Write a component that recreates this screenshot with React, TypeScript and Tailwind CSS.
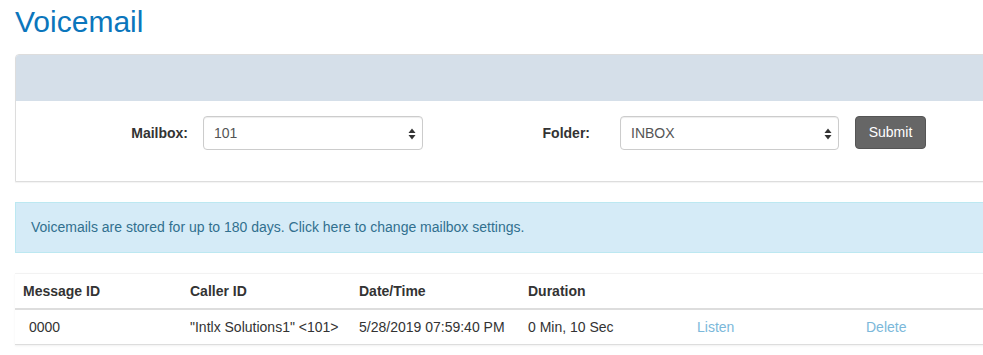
import React from "react";

const font = { fontFamily: '"Liberation Sans", Arial, sans-serif' };

function SelectBox({ value, width }: { value: string; width: string }) {
  return (
    <div
      className={`relative ${width} h-[34px] flex items-center rounded-[4px] border border-[#cccccc] bg-white pl-[10px] text-[14px] text-[#555555] shadow-[inset_0_1px_1px_rgba(0,0,0,0.075)]`}
    >
      <span>{value}</span>
      {/* up/down chevrons */}
      <svg
        className="absolute right-[6px] top-[11px]"
        width="8"
        height="12"
        viewBox="0 0 8 12"
      >
        <path d="M4 0.5 L7.5 5 L0.5 5 Z" fill="#333" />
        <path d="M4 11.5 L7.5 7 L0.5 7 Z" fill="#333" />
      </svg>
    </div>
  );
}

export default function App() {
  const columns = [
    { name: "Message ID", w: "w-[167px]" },
    { name: "Caller ID", w: "w-[169px]" },
    { name: "Date/Time", w: "w-[169px]" },
    { name: "Duration", w: "w-[169px]" },
    { name: "", w: "w-[169px]" },
    { name: "", w: "w-[169px]" },
  ];

  return (
    <div className="w-[983px] h-[355px] overflow-hidden bg-white" style={font}>
      <div className="w-[1040px] pl-[15px] text-[14px] text-[#333333]">
        {/* Title */}
        <h1 className="text-[30px] leading-[36px] text-[#0b76bc] pt-[4px] mb-[14px]">
          Voicemail
        </h1>

        {/* Filter panel */}
        <div className="rounded-t-[4px] border border-[#dddddd] shadow-[0_1px_1px_rgba(0,0,0,0.05)]">
          <div className="h-[46px] bg-[#d5dfe9] rounded-t-[3px]"></div>
          <div className="h-[80px] bg-white pt-[15px] flex">
            <div className="w-[172px] h-[34px] flex items-center justify-end font-bold">
              Mailbox:
            </div>
            <div className="ml-[15px]">
              <SelectBox value="101" width="w-[220px]" />
            </div>
            <div className="w-[167px] h-[34px] flex items-center justify-end font-bold">
              Folder:
            </div>
            <div className="ml-[30px]">
              <SelectBox value="INBOX" width="w-[219px]" />
            </div>
            <button className="ml-[16px] h-[33px] w-[71px] rounded-[4px] border border-[#555555] bg-[#666666] text-white text-[14px]">
              Submit
            </button>
          </div>
        </div>

        {/* Info alert */}
        <div className="mt-[20px] h-[51px] border border-[#bce8f1] bg-[#d5ebf7] px-[15px] flex items-center text-[#31708f]">
          Voicemails are stored for up to 180 days. Click here to change mailbox settings.
        </div>

        {/* Messages table */}
        <div className="mt-[20px] border-t border-[#f2f2f2] shadow-[0_1px_2px_rgba(0,0,0,0.06)]">
          <div className="flex h-[36px] items-center border-b-2 border-[#dddddd] font-bold">
            {columns.map((c, i) => (
              <div key={i} className={`${c.w} px-[8px]`}>
                {c.name}
              </div>
            ))}
          </div>
          <div className="flex h-[35px] items-center border-b border-[#dddddd]">
            <div className="w-[167px] pl-[14px]">0000</div>
            <div className="w-[169px] px-[8px]">"Intlx Solutions1" &lt;101&gt;</div>
            <div className="w-[169px] px-[8px]">5/28/2019 07:59:40 PM</div>
            <div className="w-[169px] px-[8px]">0 Min, 10 Sec</div>
            <div className="w-[169px] px-[8px] text-[#7bb8da]">Listen</div>
            <div className="w-[169px] px-[8px] text-[#7bb8da]">Delete</div>
          </div>
        </div>
      </div>
    </div>
  );
}
